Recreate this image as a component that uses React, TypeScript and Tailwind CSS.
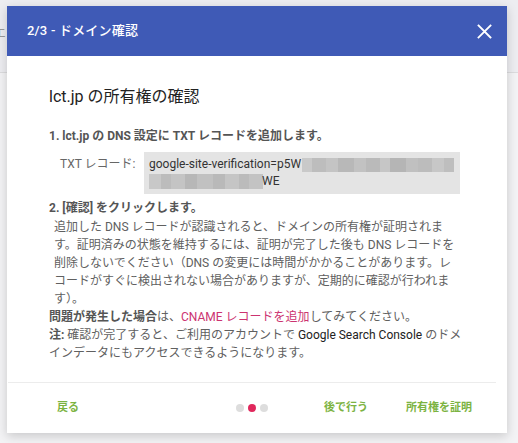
import React from "react";

const line1Blocks = [
  "w-[10px] bg-[#c9c9c9]",
  "w-[14px] bg-[#bdbdbd]",
  "w-[12px] bg-[#c4c4c4]",
  "w-[16px] bg-[#b8b8b8]",
  "w-[12px] bg-[#c2c2c2]",
  "w-[14px] bg-[#bababa]",
  "w-[10px] bg-[#c6c6c6]",
  "w-[16px] bg-[#b5b5b5]",
  "w-[12px] bg-[#c0c0c0]",
  "w-[14px] bg-[#bcbcbc]",
  "w-[12px] bg-[#c7c7c7]",
  "w-[10px] bg-[#bebebe]",
];

const line2Blocks = [
  "w-[12px] bg-[#c8c8c8]",
  "w-[10px] bg-[#bcbcbc]",
  "w-[14px] bg-[#c4c4c4]",
  "w-[12px] bg-[#b7b7b7]",
  "w-[16px] bg-[#c1c1c1]",
  "w-[12px] bg-[#b9b9b9]",
  "w-[14px] bg-[#c5c5c5]",
  "w-[10px] bg-[#bbbbbb]",
  "w-[14px] bg-[#c3c3c3]",
];

export default function App() {
  return (
    <div className="relative w-[518px] h-[443px] overflow-hidden bg-[#f3f3f5] font-['Roboto','Noto_Sans_CJK_JP',sans-serif]">
      {/* page behind the modal */}
      <div className="h-[73px] border-b border-[#dcdcde] bg-[#ededf1] flex items-center">
        <span className="text-[13px] text-[#9a9a9a] -ml-[7px] -mt-[6px]">エ</span>
      </div>

      {/* modal */}
      <div className="absolute left-[7px] top-[6px] w-[500px] h-[427px] bg-white flex flex-col shadow-[0_3px_10px_rgba(0,0,0,0.18)]">
        {/* header */}
        <div className="h-[50px] bg-[#3f5ab6] flex items-center justify-between pl-[20px] pr-[15px]">
          <span className="text-white text-[13px] font-medium tracking-[0.2px]">2/3 - ドメイン確認</span>
          <svg width="15" height="15" viewBox="0 0 15 15">
            <path d="M1.5 1.5 L13.5 13.5 M13.5 1.5 L1.5 13.5" stroke="white" strokeWidth="1.8" strokeLinecap="square" />
          </svg>
        </div>

        {/* body */}
        <div className="flex-1 pl-[42px] pt-[29px]">
          <div className="text-[16px] leading-[24px] text-[#222]">lct.jp の所有権の確認</div>

          <div className="mt-[18px] text-[12px] leading-[18px] font-bold text-[#555]">
            1. lct.jp の DNS 設定に TXT レコードを追加します。
          </div>

          <div className="mt-[7px] flex">
            <div className="ml-[11px] w-[84px] pt-[4px] text-[12px] leading-[17px] text-[#666]">TXT レコード:</div>
            <div className="w-[316px] h-[42px] bg-[#e4e4e4] px-[5px] py-[4px] text-[12px] leading-[17px] text-[#333]">
              <div className="flex items-center h-[17px]">
                <span>google-site-verification=p5W</span>
                <div className="flex h-[14px] ml-[1px]">
                  {line1Blocks.map((c, i) => (
                    <div key={i} className={`h-full ${c}`} />
                  ))}
                </div>
              </div>
              <div className="flex items-center h-[17px]">
                <div className="flex h-[15px]">
                  {line2Blocks.map((c, i) => (
                    <div key={i} className={`h-full ${c}`} />
                  ))}
                </div>
                <span className="-ml-[1px]">WE</span>
              </div>
            </div>
          </div>

          <div className="mt-[5px] text-[12px] leading-[18px] font-bold text-[#555]">
            2. [確認] をクリックします。
          </div>
          <div className="ml-[5px] mt-[1px] text-[12px] leading-[18px] text-[#606060] whitespace-nowrap">
            <div>追加した DNS レコードが認識されると、ドメインの所有権が証明されま</div>
            <div>す。証明済みの状態を維持するには、証明が完了した後も DNS レコードを</div>
            <div>削除しないでください（DNS の変更には時間がかかることがあります。レ</div>
            <div>コードがすぐに検出されない場合がありますが、定期的に確認が行われま</div>
            <div>す）。</div>
          </div>
          <div className="text-[12px] leading-[18px] text-[#606060] whitespace-nowrap">
            <div>
              <span className="font-bold text-[#555]">問題が発生した場合</span>は、
              <span className="text-[#cc3370]">CNAME レコードを追加</span>してみてください。
            </div>
            <div>
              <span className="font-bold text-[#555]">注:</span> 確認が完了すると、ご利用のアカウントで{" "}
              <span className="text-[#222]">Google Search Console</span> のドメ
            </div>
            <div>インデータにもアクセスできるようになります。</div>
          </div>
        </div>

        {/* divider */}
        <div className="h-[1px] bg-[#ececec] ml-[1px] mr-[11px]" />

        {/* footer */}
        <div className="h-[50px] flex items-center text-[11px] font-bold text-[#7cb342]">
          <span className="ml-[50px]">戻る</span>
          <div className="ml-[157px] flex items-center gap-[4px]">
            <div className="w-[8px] h-[8px] rounded-full bg-[#dddddd]" />
            <div className="w-[8px] h-[8px] rounded-full bg-[#e0285c]" />
            <div className="w-[8px] h-[8px] rounded-full bg-[#dddddd]" />
          </div>
          <span className="ml-[56px]">後で行う</span>
          <span className="ml-[38px]">所有権を証明</span>
        </div>
      </div>
    </div>
  );
}
